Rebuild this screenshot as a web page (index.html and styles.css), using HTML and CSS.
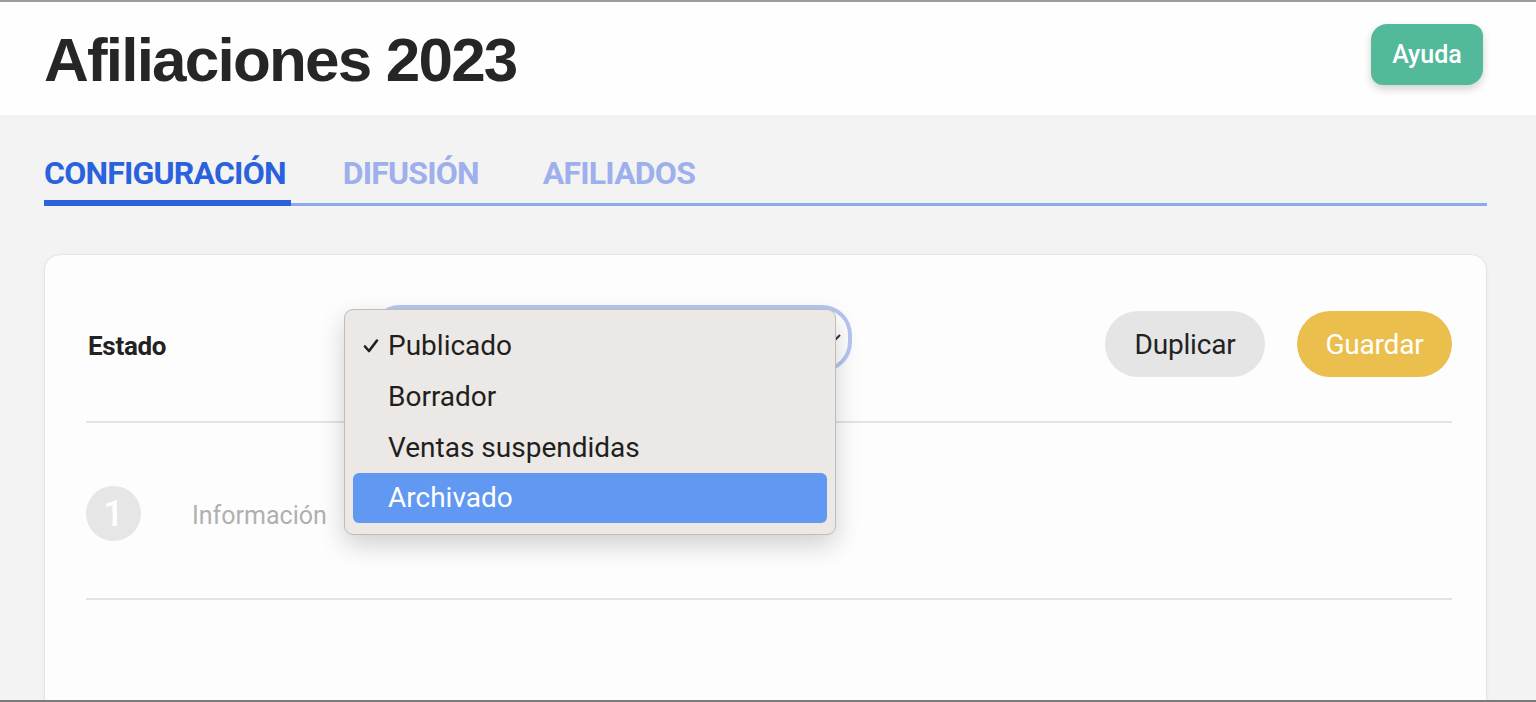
FILE: index.html
```html
<!DOCTYPE html>
<html lang="es">
<head>
<meta charset="utf-8">
<title>Afiliaciones 2023</title>
<link rel="stylesheet" href="styles.css">
</head>
<body>
<header class="topbar">
  <h1 class="title">Afiliaciones 2023</h1>
  <button class="help-btn">Ayuda</button>
</header>
<main class="main">
  <nav class="tabs">
    <a class="tab tab-active">CONFIGURACIÓN</a>
    <a class="tab tab-2">DIFUSIÓN</a>
    <a class="tab tab-3">AFILIADOS</a>
  </nav>
  <section class="card">
    <div class="status-row">
      <div class="status-label">Estado</div>
      <div class="select-wrap">
        <div class="select">
          <svg class="chevron" width="14" height="10" viewBox="0 0 14 10"><path d="M2 2 L7 7 L12 2" fill="none" stroke="#333" stroke-width="2"/></svg>
        </div>
        <ul class="menu">
          <li class="menu-item"><svg class="check" width="16" height="16" viewBox="0 0 16 16"><path d="M2 8.5 L6 13 L14 2.5" fill="none" stroke="#1f1f1f" stroke-width="2.6" stroke-linecap="round" stroke-linejoin="round"/></svg>Publicado</li>
          <li class="menu-item">Borrador</li>
          <li class="menu-item">Ventas suspendidas</li>
          <li class="menu-item menu-item-hl">Archivado</li>
        </ul>
      </div>
      <div class="actions">
        <button class="btn btn-grey">Duplicar</button>
        <button class="btn btn-yellow">Guardar</button>
      </div>
    </div>
    <div class="step-row">
      <div class="step-num">1</div>
      <div class="step-label">Información</div>
    </div>
  </section>
</main>
</body>
</html>
```

FILE: styles.css
```css
* { box-sizing: border-box; }
html, body { margin: 0; padding: 0; }
body {
  background: #f3f3f3;
  border-top: 2px solid #9c9c9c;
  border-bottom: 2px solid #7a7a7a;
  font-family: Roboto, "Noto Sans", sans-serif;
  height: 702px;
  overflow: hidden;
}
.topbar {
  background: #fefefe;
  height: 113px;
  display: flex;
  align-items: center;
  justify-content: space-between;
  padding: 0 53px 0 44px;
}
.title {
  margin: 0;
  font-family: "Liberation Sans", Arial, sans-serif;
  font-weight: 700;
  font-size: 62px;
  letter-spacing: -1.8px;
  color: #262626;
  line-height: 1;
  position: relative;
  top: 1px;
}
.help-btn {
  width: 112px;
  height: 61px;
  border: none;
  border-radius: 16px 12px 16px 12px;
  background: #53b99b;
  color: #fff;
  font-family: Roboto, sans-serif;
  font-weight: 500;
  font-size: 25px;
  box-shadow: 0 4px 8px rgba(0,0,0,0.18);
  position: relative;
  top: -4px;
}
.main {
  padding: 0 49px 0 44px;
}
.tabs {
  display: flex;
  align-items: flex-end;
  padding-top: 38px;
  background: linear-gradient(#8ca8ee, #8ca8ee) left bottom / 100% 3px no-repeat;
}
.tab {
  display: block;
  font-weight: 700;
  font-size: 32px;
  letter-spacing: -0.8px;
  line-height: 40px;
  color: #9db0ec;
  padding-bottom: 13px;
  text-transform: uppercase;
}
.tab-active {
  color: #2a62de;
  border-bottom: 6px solid #2a62de;
  padding-bottom: 7px;
  padding-right: 5px;
}
.tab-2 { margin-left: 52px; }
.tab-3 { margin-left: 64px; }
.card {
  margin-top: 48px;
  background: #fdfdfd;
  border: 1px solid #e6e6e6;
  border-radius: 16px;
  box-shadow: 0 1px 4px rgba(0,0,0,0.04);
  padding: 0 34px 0 41px;
  height: 520px;
}
.status-row {
  display: flex;
  align-items: center;
  padding: 56px 0 44px;
  border-bottom: 2px solid #e3e3e3;
}
.status-label {
  width: 284px;
  font-weight: 700;
  font-size: 26px;
  letter-spacing: -0.3px;
  color: #222;
  padding-left: 2px;
  padding-top: 4px;
}
.select-wrap {
  position: relative;
  width: 482px;
  height: 67px;
  margin-top: -12px;
}
.select {
  height: 100%;
  border: 4px solid #b5c7f1;
  border-radius: 30px;
  background: #fff;
  display: flex;
  align-items: center;
  justify-content: flex-end;
  padding: 0 6px 0 24px;
}
.menu {
  position: absolute;
  left: -26px;
  top: 4px;
  width: 492px;
  margin: 0;
  padding: 10px 8px 11px;
  list-style: none;
  background: #ebe8e5;
  border: 1px solid #bfbcb9;
  border-radius: 9px;
  box-shadow: 0 10px 26px rgba(0,0,0,0.18);
}
.menu-item {
  position: relative;
  height: 51px;
  line-height: 51px;
  padding-left: 35px;
  font-size: 28px;
  letter-spacing: 0;
  color: #1f1f1f;
  border-radius: 6px;
}
.menu-item-hl {
  background: #6198f2;
  color: #fff;
  height: 50px;
  line-height: 50px;
}
.check {
  position: absolute;
  left: 10px;
  top: 18px;
}
.actions {
  margin-left: auto;
  display: flex;
  gap: 32px;
}
.btn {
  height: 66px;
  border: none;
  border-radius: 33px;
  font-family: Roboto, sans-serif;
  font-size: 28px;
  letter-spacing: -0.2px;
  padding: 0;
}
.btn-grey { width: 160px; background: #e5e5e5; color: #222; }
.btn-yellow { width: 155px; background: #ebbf4d; color: #fff; }
.step-row {
  display: flex;
  align-items: center;
  height: 177px;
  border-bottom: 2px solid #e3e3e3;
  padding-top: 6px;
}
.step-num {
  width: 55px;
  height: 55px;
  border-radius: 50%;
  background: #e6e6e6;
  color: #fff;
  font-size: 36px;
  font-weight: 500;
  display: flex;
  align-items: center;
  justify-content: center;
}
.step-label {
  margin-left: 51px;
  font-size: 25px;
  letter-spacing: 0;
  color: #b0b0b0;
  padding-top: 4px;
}
```
